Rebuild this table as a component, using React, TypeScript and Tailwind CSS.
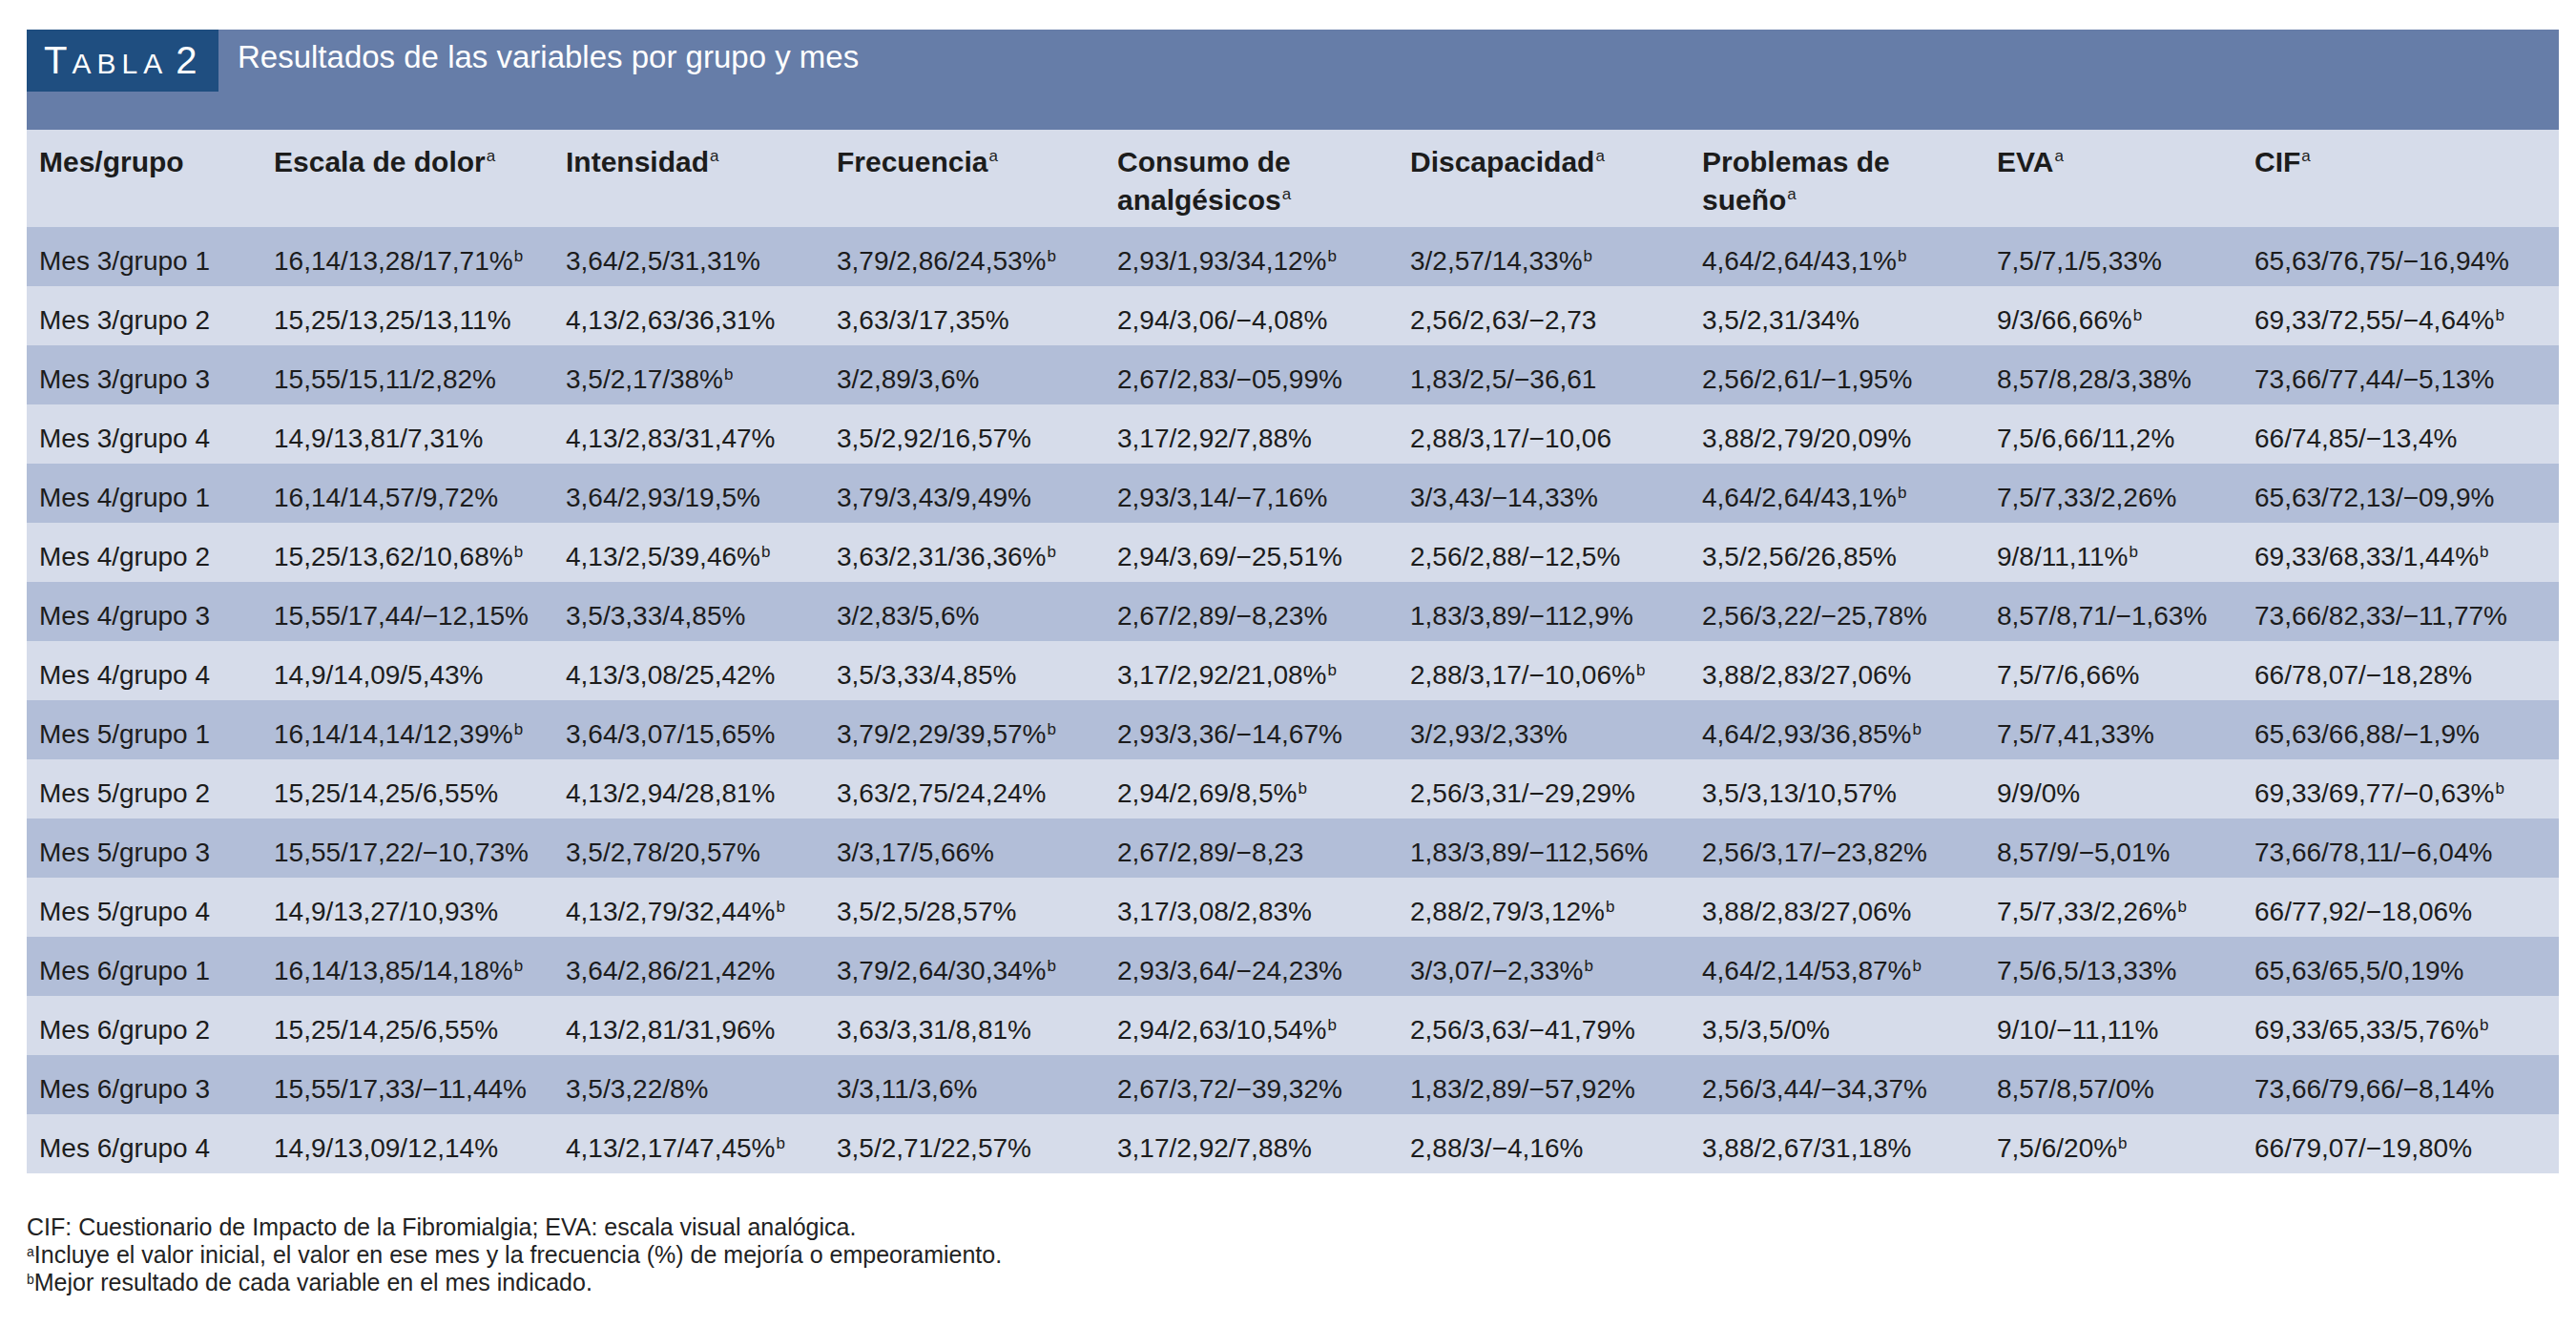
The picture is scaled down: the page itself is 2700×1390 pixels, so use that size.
import { FC } from "react";

// "|" splits a header into its printed lines, "^" adds the superscript a
const cols = [
  "Mes/grupo",
  "Escala de dolor^",
  "Intensidad^",
  "Frecuencia^",
  "Consumo de|analgésicos^",
  "Discapacidad^",
  "Problemas de|sueño^",
  "EVA^",
  "CIF^",
];

// a trailing "^" marks the best result (superscript b)
const rows: string[][] = [
  ["Mes 3/grupo 1", "16,14/13,28/17,71%^", "3,64/2,5/31,31%", "3,79/2,86/24,53%^", "2,93/1,93/34,12%^", "3/2,57/14,33%^", "4,64/2,64/43,1%^", "7,5/7,1/5,33%", "65,63/76,75/−16,94%"],
  ["Mes 3/grupo 2", "15,25/13,25/13,11%", "4,13/2,63/36,31%", "3,63/3/17,35%", "2,94/3,06/−4,08%", "2,56/2,63/−2,73", "3,5/2,31/34%", "9/3/66,66%^", "69,33/72,55/−4,64%^"],
  ["Mes 3/grupo 3", "15,55/15,11/2,82%", "3,5/2,17/38%^", "3/2,89/3,6%", "2,67/2,83/−05,99%", "1,83/2,5/−36,61", "2,56/2,61/−1,95%", "8,57/8,28/3,38%", "73,66/77,44/−5,13%"],
  ["Mes 3/grupo 4", "14,9/13,81/7,31%", "4,13/2,83/31,47%", "3,5/2,92/16,57%", "3,17/2,92/7,88%", "2,88/3,17/−10,06", "3,88/2,79/20,09%", "7,5/6,66/11,2%", "66/74,85/−13,4%"],
  ["Mes 4/grupo 1", "16,14/14,57/9,72%", "3,64/2,93/19,5%", "3,79/3,43/9,49%", "2,93/3,14/−7,16%", "3/3,43/−14,33%", "4,64/2,64/43,1%^", "7,5/7,33/2,26%", "65,63/72,13/−09,9%"],
  ["Mes 4/grupo 2", "15,25/13,62/10,68%^", "4,13/2,5/39,46%^", "3,63/2,31/36,36%^", "2,94/3,69/−25,51%", "2,56/2,88/−12,5%", "3,5/2,56/26,85%", "9/8/11,11%^", "69,33/68,33/1,44%^"],
  ["Mes 4/grupo 3", "15,55/17,44/−12,15%", "3,5/3,33/4,85%", "3/2,83/5,6%", "2,67/2,89/−8,23%", "1,83/3,89/−112,9%", "2,56/3,22/−25,78%", "8,57/8,71/−1,63%", "73,66/82,33/−11,77%"],
  ["Mes 4/grupo 4", "14,9/14,09/5,43%", "4,13/3,08/25,42%", "3,5/3,33/4,85%", "3,17/2,92/21,08%^", "2,88/3,17/−10,06%^", "3,88/2,83/27,06%", "7,5/7/6,66%", "66/78,07/−18,28%"],
  ["Mes 5/grupo 1", "16,14/14,14/12,39%^", "3,64/3,07/15,65%", "3,79/2,29/39,57%^", "2,93/3,36/−14,67%", "3/2,93/2,33%", "4,64/2,93/36,85%^", "7,5/7,41,33%", "65,63/66,88/−1,9%"],
  ["Mes 5/grupo 2", "15,25/14,25/6,55%", "4,13/2,94/28,81%", "3,63/2,75/24,24%", "2,94/2,69/8,5%^", "2,56/3,31/−29,29%", "3,5/3,13/10,57%", "9/9/0%", "69,33/69,77/−0,63%^"],
  ["Mes 5/grupo 3", "15,55/17,22/−10,73%", "3,5/2,78/20,57%", "3/3,17/5,66%", "2,67/2,89/−8,23", "1,83/3,89/−112,56%", "2,56/3,17/−23,82%", "8,57/9/−5,01%", "73,66/78,11/−6,04%"],
  ["Mes 5/grupo 4", "14,9/13,27/10,93%", "4,13/2,79/32,44%^", "3,5/2,5/28,57%", "3,17/3,08/2,83%", "2,88/2,79/3,12%^", "3,88/2,83/27,06%", "7,5/7,33/2,26%^", "66/77,92/−18,06%"],
  ["Mes 6/grupo 1", "16,14/13,85/14,18%^", "3,64/2,86/21,42%", "3,79/2,64/30,34%^", "2,93/3,64/−24,23%", "3/3,07/−2,33%^", "4,64/2,14/53,87%^", "7,5/6,5/13,33%", "65,63/65,5/0,19%"],
  ["Mes 6/grupo 2", "15,25/14,25/6,55%", "4,13/2,81/31,96%", "3,63/3,31/8,81%", "2,94/2,63/10,54%^", "2,56/3,63/−41,79%", "3,5/3,5/0%", "9/10/−11,11%", "69,33/65,33/5,76%^"],
  ["Mes 6/grupo 3", "15,55/17,33/−11,44%", "3,5/3,22/8%", "3/3,11/3,6%", "2,67/3,72/−39,32%", "1,83/2,89/−57,92%", "2,56/3,44/−34,37%", "8,57/8,57/0%", "73,66/79,66/−8,14%"],
  ["Mes 6/grupo 4", "14,9/13,09/12,14%", "4,13/2,17/47,45%^", "3,5/2,71/22,57%", "3,17/2,92/7,88%", "2,88/3/−4,16%", "3,88/2,67/31,18%", "7,5/6/20%^", "66/79,07/−19,80%"],
];

const gridCols =
  "grid grid-cols-[246px_306px_284px_294px_307px_306px_309px_270px_1fr]";

const Cell: FC<{ value: string }> = ({ value }) => {
  const best = value.endsWith("^");
  const text = best ? value.slice(0, -1) : value;
  return (
    <div className="pl-[13px] whitespace-nowrap">
      {text}
      {best && (
        <span className="ml-[1px] align-[9px] text-[17px] leading-none">b</span>
      )}
    </div>
  );
};

const HeadCell: FC<{ value: string }> = ({ value }) => {
  const lines = value.split("|");
  return (
    <div className="pl-[13px]">
      {lines.map((line) => {
        const sup = line.endsWith("^");
        const text = sup ? line.slice(0, -1) : line;
        return (
          <div key={line} className="whitespace-nowrap">
            {text}
            {sup && (
              <span className="ml-[1px] align-[11px] text-[17px] font-normal leading-none">
                a
              </span>
            )}
          </div>
        );
      })}
    </div>
  );
};

const App: FC = () => {
  return (
    <div className="w-[2700px] h-[1390px] bg-white pt-[31px] pl-[28px] font-['Liberation_Sans',Arial,sans-serif] text-[#1c1c1c]">
      <div className="w-[2654px]">
        {/* banner */}
        <div className="flex h-[105px] bg-[#667da8]">
          <div className="h-[65px] w-[201px] bg-[#1f4e80] pl-[18px] pt-[12px] text-[40px] leading-[40px] whitespace-nowrap text-white">
            <span className="tracking-[5px]">T</span>
            <span className="text-[30px] tracking-[6px]">ABLA</span>
            <span className="ml-[8px]">2</span>
          </div>
          <div className="ml-[20px] pt-[9px] text-[33px] leading-[40px] text-white">
            Resultados de las variables por grupo y mes
          </div>
        </div>

        {/* column headers */}
        <div
          className={`${gridCols} h-[102px] bg-[#d6dcea] pt-[14px] text-[30px] font-bold leading-[40px]`}
        >
          {cols.map((c) => (
            <HeadCell key={c} value={c} />
          ))}
        </div>

        {/* data rows */}
        {rows.map((r, i) => (
          <div
            key={r[0]}
            className={`${gridCols} h-[62px] pt-[10px] text-[28px] leading-[52px] ${
              i % 2 === 0 ? "bg-[#b2bed8]" : "bg-[#d6dcea]"
            }`}
          >
            {r.map((v, j) => (
              <Cell key={j} value={v} />
            ))}
          </div>
        ))}
      </div>

      {/* footnotes */}
      <div className="mt-[42px] text-[25px] leading-[29px] text-[#222]">
        <p>CIF: Cuestionario de Impacto de la Fibromialgia; EVA: escala visual analógica.</p>
        <p>
          <span className="align-[7px] text-[14px] leading-none">a</span>
          Incluye el valor inicial, el valor en ese mes y la frecuencia (%) de mejoría o empeoramiento.
        </p>
        <p>
          <span className="align-[7px] text-[14px] leading-none">b</span>
          Mejor resultado de cada variable en el mes indicado.
        </p>
      </div>
    </div>
  );
};

export default App;
